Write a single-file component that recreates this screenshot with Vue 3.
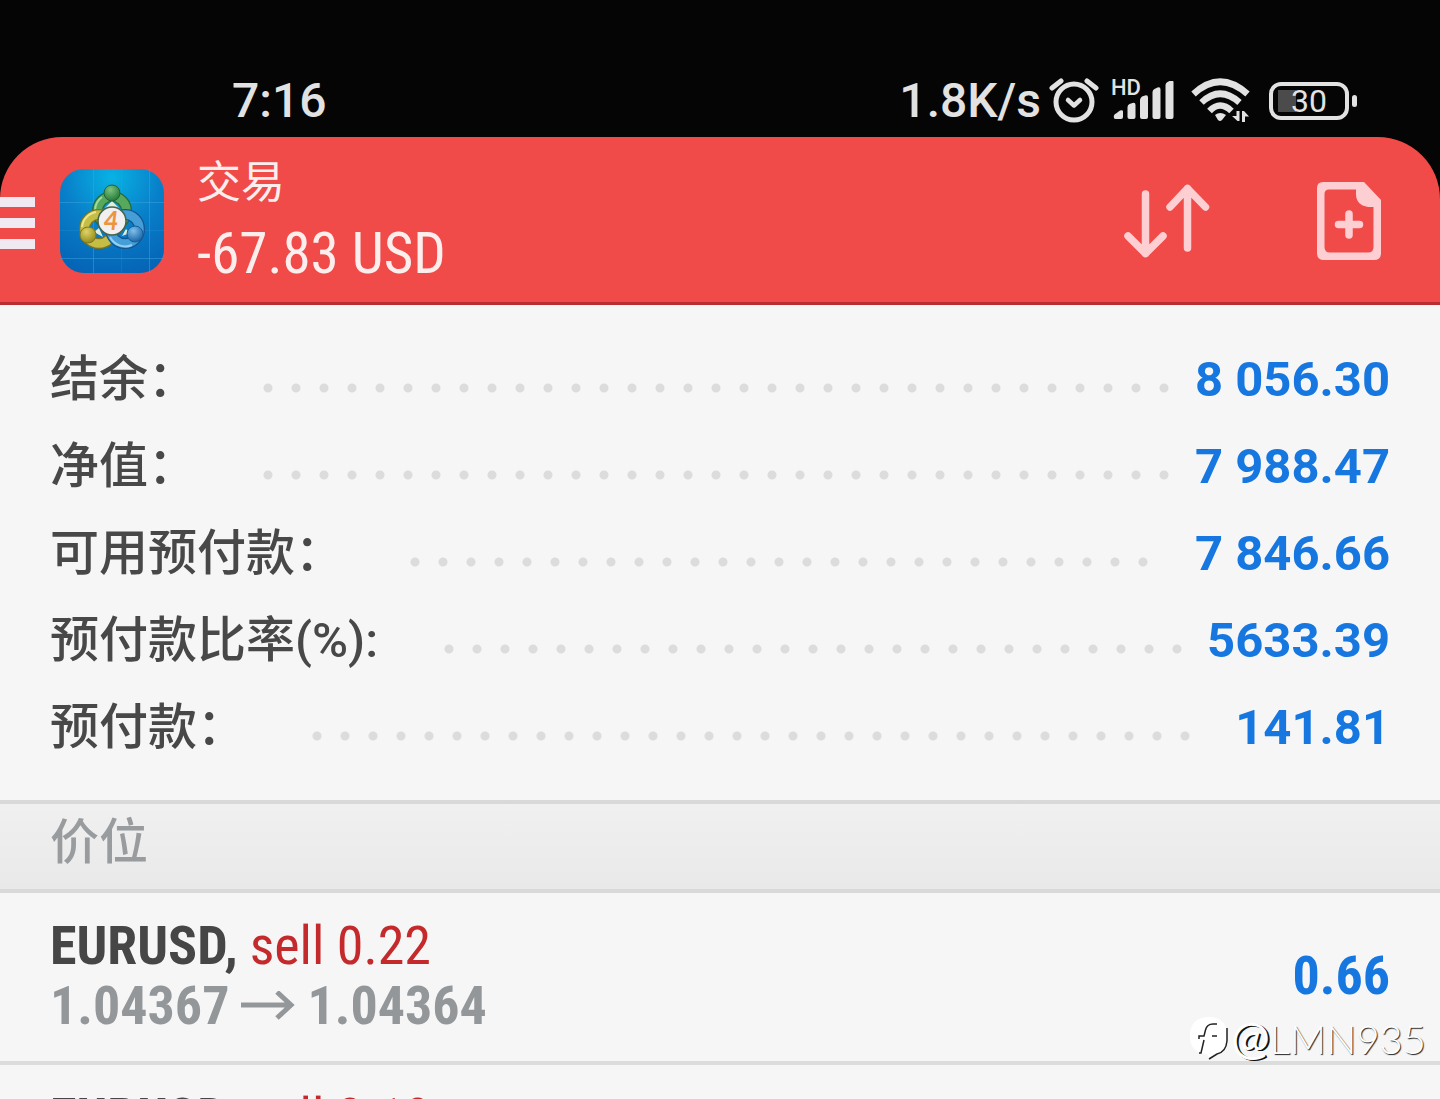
<template>
  <div class="screen">
    <div class="status-bar">
      <time class="clock">7:16</time>
      <div class="indicators">
        <span class="speed">1.8K/s</span>
        <svg class="alarm" viewBox="0 0 50 48" width="50" height="48" aria-hidden="true">
          <g fill="none" stroke="currentColor" stroke-linecap="round">
            <circle cx="25" cy="25" r="18" stroke-width="5" />
            <path d="M3 11 L12 4 M47 11 L38 4" stroke-width="5" />
            <path d="M19 23 L25 28.500 L31 23" stroke-width="4.500" stroke-linejoin="round" />
          </g>
        </svg>
        <div class="signal">
          <span class="hd">HD</span>
          <svg viewBox="0 0 62 40" width="62" height="40" aria-hidden="true">
            <g fill="currentColor">
              <path d="M1 37 q-1 -3 2 -4.500 l4 -3 q3 -1 3 1 V36 q0 2 -2 2 H3 q-2 0 -2 -1z" />
              <path d="M14.500 26 q0 -2 2 -3 l3 -1 q3 -1 3 2 V36 q0 2 -2 2 h-4 q-2 0 -2 -2z" />
              <path d="M27 19 q0 -2 2 -3.500 l3 -1 q3 -1 3 2 V36 q0 2 -2 2 h-4 q-2 0 -2 -2z" />
              <path d="M39.500 11 q0 -2 2 -3 l3 -1.500 q3 -1 3 2 V36 q0 2 -2 2 h-4 q-2 0 -2 -2z" />
              <path d="M52.500 4 q0 -2 2 -3 l3 -1.500 q3 -1 3 2 V36 q0 2 -2 2 h-4 q-2 0 -2 -2z" />
            </g>
          </svg>
        </div>
        <svg class="wifi" viewBox="0 0 60 46" width="60" height="46" aria-hidden="true">
          <g fill="none" stroke="currentColor" stroke-width="6.500">
            <path d="M2.500 16 Q29 -8.500 56.500 16" />
            <path d="M10.500 24.500 Q29 7 48.500 24.500" />
            <path d="M18.500 33 Q29 22 40.500 33" />
          </g>
          <path d="M24 37 Q29 33 35 37 L31 42 Q29 44 27 42z" fill="currentColor" />
          <path d="M48.500 33 V43 H46.500 L41 38 H45.500 V33z M51 44 V33 H53 L58 38.500 H54 V44z" fill="currentColor" />
        </svg>
        <div class="battery">
          <span class="level">30</span>
        </div>
      </div>
    </div>

    <header class="header">
      <button class="menu" type="button" aria-label="Menu">
        <span></span>
        <span></span>
        <span></span>
      </button>
      <svg class="logo" viewBox="0 0 104 104" width="104" height="104" aria-hidden="true">
        <defs>
          <radialGradient id="sky" cx="0.5" cy="0.08" r="0.95">
            <stop offset="0" stop-color="#08b2e4" />
            <stop offset="0.5" stop-color="#087fc9" />
            <stop offset="1" stop-color="#0564b6" />
          </radialGradient>
          <radialGradient id="green" cx="0.4" cy="0.3" r="0.7">
            <stop offset="0" stop-color="#7fc280" />
            <stop offset="1" stop-color="#257a3b" />
          </radialGradient>
          <radialGradient id="yellow" cx="0.4" cy="0.3" r="0.7">
            <stop offset="0" stop-color="#e0d468" />
            <stop offset="1" stop-color="#958b1c" />
          </radialGradient>
          <radialGradient id="blue" cx="0.4" cy="0.3" r="0.7">
            <stop offset="0" stop-color="#7fc0ea" />
            <stop offset="1" stop-color="#1b66a8" />
          </radialGradient>
        </defs>
        <rect width="104" height="104" rx="24" fill="url(#sky)" />
        <path d="M0 33.500 H104 M0 89.500 H104 M33.500 0 V104 M89.500 0 V104" stroke="#3ba4df" stroke-opacity="0.5" />
        <path d="M0 61.500 H104 M61.500 0 V104" stroke="#3ba4df" stroke-opacity="0.2" />
        <g fill="none">
          <circle cx="52" cy="42" r="14.500" stroke="#236b3b" stroke-width="11" />
          <circle cx="52" cy="42" r="14.500" stroke="#57a85c" stroke-width="8.500" />
          <path d="M35 41 A17 17 0 0 1 42 28" stroke="#a6d99d" stroke-width="2" />
          <circle cx="39" cy="60" r="14.500" stroke="#77751f" stroke-width="11" />
          <circle cx="39" cy="60" r="14.500" stroke="#c5bd45" stroke-width="8.500" />
          <path d="M22 58 A17 17 0 0 1 36 43" stroke="#ece690" stroke-width="2" />
          <circle cx="65" cy="60" r="14.500" stroke="#15558f" stroke-width="11" />
          <circle cx="65" cy="60" r="14.500" stroke="#459ed8" stroke-width="8.500" />
          <path d="M50 68 A17 17 0 0 0 72 76" stroke="#94d0f2" stroke-width="2" />
        </g>
        <path d="M45 39 L52 32 L59 39z M34 63 L39 59 L43 68z M62 67 L66 60 L70 64z" fill="#e1eedc" />
        <circle cx="52" cy="24" r="8" fill="url(#green)" stroke="#1d6536" />
        <circle cx="28" cy="66" r="8" fill="url(#yellow)" stroke="#807a1c" />
        <circle cx="75" cy="65" r="8" fill="url(#blue)" stroke="#145e9c" />
        <circle cx="52" cy="52" r="14" fill="#f1eff0" stroke="#46634b" stroke-width="1.500" />
        <text class="logo-digit" x="51" y="61" text-anchor="middle">4</text>
      </svg>
      <div class="heading">
        <h1>交易</h1>
        <p>-67.83 USD</p>
      </div>
      <button class="tool" type="button" aria-label="Sort">
        <svg viewBox="0 0 86 76" width="86" height="76">
          <g fill="none" stroke="currentColor" stroke-width="7.500" stroke-linecap="round" stroke-linejoin="round">
            <path d="M21.500 11 V70.500 M4 53 L21.500 70.500 L39 53" />
            <path d="M63.500 65 V5.500 M46 24 L63.500 5.500 L81.500 24" />
          </g>
        </svg>
      </button>
      <button class="tool" type="button" aria-label="New order">
        <svg viewBox="0 0 64 78" width="64" height="78">
          <path
            d="M6 0 H47 L64 18 V71 Q64 78 57 78 H7 Q0 78 0 71 V6 Q0 0 6 0z M12 7.500 Q7.500 7.500 7.500 12 V65 Q7.500 70.500 13 70.500 H51 Q56.500 70.500 56.500 65 V25 H51 Q39 23 39 12 V7.500z"
            fill="currentColor"
            fill-rule="evenodd"
          />
          <path d="M32 32 V53 M21.500 42.500 H42.500" stroke="currentColor" stroke-width="7.500" stroke-linecap="round" />
        </svg>
      </button>
    </header>

    <main>
      <dl class="summary">
        <div class="summary-row" v-for="item in summary" :key="item.label">
          <dt>{{ item.label }}</dt>
          <dd>
            <span class="leader"></span>
            <span>{{ item.value }}</span>
          </dd>
        </div>
      </dl>

      <h2 class="section-title">价位</h2>

      <ul class="positions">
        <li class="position" v-for="position in positions" :key="position.id">
          <div>
            <p class="deal">
              <strong>{{ position.symbol }},</strong>
              <span class="side">{{ position.side }} {{ position.volume }}</span>
            </p>
            <p class="prices">
              <span>{{ position.open }}</span>
              <svg viewBox="0 0 54 30" width="54" height="30" aria-hidden="true">
                <path d="M0 14 H50 M36 1 L50 14 L36 27" fill="none" stroke="currentColor" stroke-width="5" />
              </svg>
              <span>{{ position.current }}</span>
            </p>
          </div>
          <span class="profit">{{ position.profit }}</span>
        </li>
      </ul>
    </main>

    <div class="watermark">
      <svg viewBox="0 0 40 44" width="40" height="44" aria-hidden="true">
        <path d="M20 1 Q38 1 38 20 Q38 34 28 38 L20 43 L18 38 Q1 37 1 20 Q1 1 20 1z" fill="#fff" />
        <g fill="none" stroke="#222" stroke-width="1.500">
          <path d="M38 12 V25 Q37 36 28 38 L20 43" />
          <path d="M28 8 H24 Q18 8 16.500 14 L15 20 H10 V23" />
          <path d="M28 20 H23 M15 24 L12 37 H10" />
        </g>
      </svg>
      <span><b>@</b>LMN935</span>
    </div>
  </div>
</template>

<script setup>
import { ref } from "vue";

const summary = ref([
  { label: "结余：", value: "8 056.30" },
  { label: "净值：", value: "7 988.47" },
  { label: "可用预付款：", value: "7 846.66" },
  { label: "预付款比率(%):", value: "5633.39" },
  { label: "预付款：", value: "141.81" },
]);

const positions = ref([
  {
    id: 1,
    symbol: "EURUSD",
    side: "sell",
    volume: "0.22",
    open: "1.04367",
    current: "1.04364",
    profit: "0.66",
  },
  {
    id: 2,
    symbol: "EURUSD",
    side: "sell",
    volume: "0.18",
  },
]);
</script>

<style>
body {
  margin: 0;
  background: #050505;
}
</style>

<style scoped>
.screen {
  position: relative;
  display: flex;
  flex-direction: column;
  height: 100vh;
  overflow: hidden;
  background: #050505;
  font-family: Roboto, "Noto Sans CJK SC", sans-serif;
}

h1,
h2,
p,
dl,
dd,
ul {
  margin: 0;
  padding: 0;
}

button {
  padding: 0;
  border: 0;
  background: none;
  color: inherit;
  cursor: pointer;
}

svg {
  display: block;
  flex-shrink: 0;
}

/* Status bar */
.status-bar {
  display: flex;
  align-items: center;
  justify-content: space-between;
  flex-shrink: 0;
  height: 73px;
  padding: 64px 83px 0 232px;
  color: #e2e2e2;
  font-size: 48px;
  font-weight: 500;
}

.indicators {
  display: flex;
  align-items: center;
}

.alarm {
  margin: 0 14px 0 8px;
}

.signal {
  position: relative;
  margin-right: 16px;
}

.hd {
  position: absolute;
  top: -4px;
  left: -2px;
  font-size: 22px;
  line-height: 22px;
}

.wifi {
  margin-right: 18px;
}

.battery {
  position: relative;
  box-sizing: border-box;
  width: 80px;
  height: 38px;
  margin-right: 8px;
  border: 4px solid;
  border-radius: 12px;
  background: linear-gradient(#4b4b4b, #4b4b4b) 5px 4px / 18px 22px no-repeat;
}

.battery::after {
  content: "";
  position: absolute;
  top: 9px;
  right: -12px;
  width: 5px;
  height: 12px;
  border-radius: 3px;
  background: currentColor;
}

.level {
  display: block;
  font-size: 32px;
  font-weight: 400;
  line-height: 30px;
  text-align: center;
}

/* Header */
.header {
  display: flex;
  align-items: center;
  flex-shrink: 0;
  padding: 13px 59px 10px 0;
  border-bottom: 3px solid #b92e33;
  border-radius: 62px 62px 0 0;
  background: #f04a49;
  color: #fdeeee;
}

.menu {
  display: flex;
  flex-direction: column;
  gap: 11px;
  width: 35px;
  margin-right: 25px;
  padding-top: 4px;
}

.menu span {
  height: 10px;
  background: #f1e9f1;
}

.logo-digit {
  fill: #ee943d;
  font-family: Lato, sans-serif;
  font-size: 26px;
  font-style: italic;
  font-weight: 700;
}

.heading {
  flex: 1;
  margin-left: 33px;
}

.heading h1 {
  font-size: 44px;
  font-weight: 400;
  line-height: 66px;
}

.heading p {
  font-family: "Roboto Condensed", "Liberation Sans Narrow", Roboto, sans-serif;
  font-size: 57px;
  line-height: 76px;
}

.tool {
  color: #fdcfd2;
}

.tool + .tool {
  margin-left: 107px;
}

main {
  flex: 1;
  background: #f6f6f6;
}

/* Account summary */
.summary {
  padding: 31px 50px 29px;
}

.summary-row {
  display: flex;
  align-items: center;
  height: 87px;
}

.summary dt {
  color: #484848;
  font-size: 49px;
  font-weight: 500;
  line-height: 87px;
  white-space: nowrap;
}

.summary dd {
  display: flex;
  flex: 1;
  align-items: center;
  color: #1677e0;
  font-size: 49px;
  font-weight: 700;
  white-space: nowrap;
}

.leader {
  flex: 1;
  margin: 16px 7px 0 66px;
}

/* only whole dots: the width snaps down to the 28px step */
.leader::before {
  content: "";
  display: block;
  width: round(down, 100%, 28px);
  height: 10px;
  background: radial-gradient(circle at 5px 5px, #dcdcdc 4px, transparent 5px) 0 0 / 28px 10px;
}

/* Section title */
.section-title {
  padding: 0 50px 8px;
  border: solid #d9d9d9;
  border-width: 4px 0;
  background: linear-gradient(#f0f0f0, #e9e9e9);
  color: #999c9e;
  font-size: 49px;
  font-weight: 500;
  line-height: 77px;
}

/* Positions */
.positions {
  list-style: none;
}

.position {
  display: flex;
  align-items: center;
  justify-content: space-between;
  padding: 23px 50px 25px;
  border-bottom: 4px solid #dcdcdc;
  font-family: "Roboto Condensed", "Liberation Sans Narrow", Roboto, sans-serif;
  font-size: 54px;
  line-height: 60px;
}

.deal {
  display: flex;
  gap: 12px;
}

.deal strong {
  color: #464646;
}

.side {
  color: #c42a2c;
}

.prices {
  display: flex;
  align-items: center;
  gap: 12px;
  color: #949799;
  font-weight: 700;
}

.profit {
  color: #1677e0;
  font-weight: 700;
}

/* Watermark */
.watermark {
  position: absolute;
  right: 14px;
  bottom: 36px;
  display: flex;
  align-items: center;
  gap: 2px;
  color: #fff;
  font-family: Lato, sans-serif;
  font-size: 40px;
  font-weight: 300;
  line-height: 48px;
  text-shadow: 1px 1px 1px #222;
}

.watermark b {
  font-size: 46px;
  font-weight: 400;
  text-shadow: 2px 1px 0 #111;
}
</style>
